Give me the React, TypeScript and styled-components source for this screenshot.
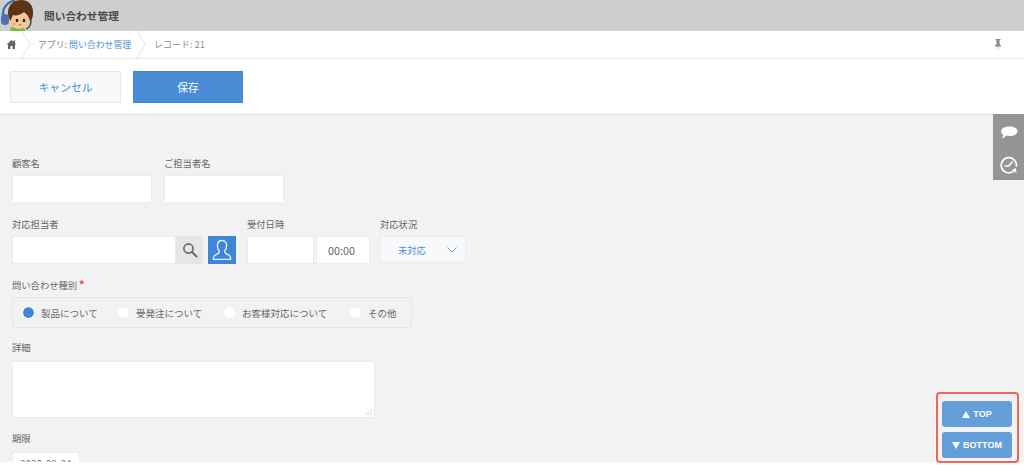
import React from "react";
import styled, { createGlobalStyle } from "styled-components";

const Global = createGlobalStyle`
  html, body { margin: 0; padding: 0; background: #fff; }
  body { font-family: "Noto Sans CJK JP", "Noto Sans", sans-serif; color: #666; }
`;

const Page = styled.div`
  position: relative;
  width: 1024px;
  height: 465px;
  overflow: hidden;
  display: flex;
  flex-direction: column;
`;

const GlobalBar = styled.header`
  height: 31px;
  flex: none;
  background: #cdcfce;
  display: flex;
  align-items: center;
  box-sizing: border-box;
  padding-left: 44px;
  position: relative;
`;

const AvatarSlot = styled.svg`
  position: absolute;
  left: 0;
  top: 0;
  z-index: 2;
`;

const AppTitle = styled.h1`
  margin: 0;
  font-size: 10.7px;
  font-weight: 700;
  color: #4a4a4a;
  line-height: 31px;
`;

const Breadcrumb = styled.nav`
  height: 28px;
  flex: none;
  box-sizing: border-box;
  background: #fff;
  border-bottom: 1px solid #e8e8e8;
  display: flex;
  align-items: center;
  font-size: 8.9px;
  color: #888;
`;

const Crumb = styled.div<{ $w: number; $pl: number }>`
  width: ${(p) => p.$w}px;
  padding-left: ${(p) => p.$pl}px;
  box-sizing: border-box;
  height: 27px;
  display: flex;
  align-items: center;
  position: relative;
  flex: none;
  white-space: nowrap;
`;

const Chevron = styled.svg`
  position: absolute;
  right: 0;
  top: 0;
`;

const CrumbLink = styled.span`
  color: #4a90d9;
`;

const RecordText = styled.span`
  letter-spacing: 0.15px;
`;

const PinSlot = styled.div`
  margin-left: auto;
  margin-right: 22px;
  display: flex;
  align-items: center;
`;

const Toolbar = styled.div`
  height: 56px;
  flex: none;
  box-sizing: border-box;
  background: #fff;
  border-bottom: 1px solid #e3e3e3;
  padding: 12px 0 0 10px;
  display: flex;
  align-items: flex-start;
  gap: 12px;
`;

const ActionButton = styled.button<{ $primary?: boolean }>`
  width: ${(p) => (p.$primary ? 110 : 111)}px;
  height: 32px;
  box-sizing: border-box;
  border: 1px solid ${(p) => (p.$primary ? "#3f86d0" : "#e3e7e8")};
  background: ${(p) => (p.$primary ? "#4a8cd6" : "#f7f9fa")};
  color: ${(p) => (p.$primary ? "#ffffff" : "#4a90d9")};
  font-family: inherit;
  font-size: 10.8px;
  padding: 0;
`;

const Form = styled.main`
  flex: none;
  height: 347px;
  overflow: hidden;
  background: #f2f2f2;
  padding: 42px 0 0 12px;
  box-sizing: border-box;
  display: flex;
  flex-direction: column;
`;

const Row = styled.div<{ $mb: number }>`
  display: flex;
  align-items: flex-start;
  margin-bottom: ${(p) => p.$mb}px;
`;

const Field = styled.div<{ $w: number }>`
  width: ${(p) => p.$w}px;
  flex: none;
`;

const Label = styled.div<{ $gap?: number }>`
  font-size: 9.3px;
  line-height: 13px;
  height: 13px;
  margin-bottom: ${(p) => p.$gap ?? 5}px;
  color: #666;
  white-space: nowrap;
`;

const Required = styled.span`
  color: #e74c3c;
  margin-left: 2px;
  font-size: 11px;
  font-weight: 700;
`;

const Input = styled.div<{ $w: number; $h?: number }>`
  width: ${(p) => p.$w}px;
  height: ${(p) => p.$h ?? 28}px;
  box-sizing: border-box;
  background: #fff;
  border: 1px solid #ececec;
  flex: none;
  font-size: 10.8px;
  color: #666;
  display: flex;
  align-items: center;
  justify-content: center;
  position: relative;
`;

const TimeInput = styled(Input)`
  padding-right: 3px;
`;

const DateInput = styled(Input)`
  padding-bottom: 6px;
`;

const Controls = styled.div<{ $gap?: number }>`
  display: flex;
  align-items: stretch;
  gap: ${(p) => p.$gap ?? 0}px;
`;

const SearchButton = styled.div`
  width: 27px;
  height: 28px;
  background: #e6e6e6;
  display: flex;
  align-items: center;
  justify-content: center;
`;

const UserButton = styled.div`
  width: 28px;
  height: 28px;
  margin-left: 5px;
  background: #3f87d6;
  display: flex;
  align-items: center;
  justify-content: center;
`;

const Select = styled.div`
  width: 86px;
  height: 27px;
  box-sizing: border-box;
  background: #f7f9fa;
  border: 1px solid #e9ecee;
  color: #4a90d9;
  font-size: 9.3px;
  display: flex;
  align-items: center;
  justify-content: space-between;
  padding: 0 8px 0 17px;
`;

const RadioBox = styled.div`
  width: 400px;
  height: 31px;
  box-sizing: border-box;
  border: 1px solid #e6e6e6;
  display: flex;
  align-items: center;
  padding-left: 9px;
  font-size: 9.5px;
  color: #666;
`;

const RadioItem = styled.label<{ $w: number }>`
  width: ${(p) => p.$w}px;
  flex: none;
  display: flex;
  align-items: center;
  gap: 6px;
  white-space: nowrap;
`;

const RadioDot = styled.span<{ $checked?: boolean }>`
  width: 13px;
  height: 13px;
  flex: none;
  box-sizing: border-box;
  border-radius: 50%;
  background: ${(p) => (p.$checked ? "#3f87d6" : "#fff")};
  background-clip: padding-box;
  border: 1.5px solid ${(p) => (p.$checked ? "#fff" : "#f4f4f4")};
`;

const Grip = styled.svg`
  position: absolute;
  right: 1px;
  bottom: 1px;
`;

const DateText = styled.span`
  font-size: 9.3px;
  color: #777;
  white-space: nowrap;
  letter-spacing: 0.4px;
`;

const SideTools = styled.aside`
  position: absolute;
  right: 0;
  top: 114px;
  width: 31px;
  height: 66px;
  background: #959595;
  display: flex;
  flex-direction: column;
  align-items: center;
  gap: 17px;
  padding: 12px 0 0 1px;
  box-sizing: border-box;
`;

const ScrollFrame = styled.div`
  position: absolute;
  left: 936px;
  top: 392px;
  width: 83px;
  height: 71px;
  box-sizing: border-box;
  border: 2px solid #e8695a;
  border-radius: 4px;
  padding: 7px 5px 0 4px;
  display: flex;
  flex-direction: column;
  gap: 5px;
`;

const ScrollButton = styled.button`
  height: 26px;
  border: none;
  border-radius: 3px;
  background: #649fdc;
  color: #fff;
  font-family: "Liberation Sans", Arial, sans-serif;
  font-weight: 700;
  font-size: 9px;
  padding: 0;
  display: flex;
  align-items: center;
  justify-content: center;
  gap: 3px;
`;

const ScrollArrow = styled.span<{ $down?: boolean }>`
  width: 0;
  height: 0;
  border-left: 4.5px solid transparent;
  border-right: 4.5px solid transparent;
  border-${(p) => (p.$down ? "top" : "bottom")}: 7px solid #fff;
`;

const Avatar = () => (
  <AvatarSlot width="36" height="31" viewBox="0 0 36 31">
    <path d="M10 31 L11 27 H24 L25 31 Z" fill="#6cc04a" />
    <path d="M3 16 C2 8 7 2 15 0.5" fill="none" stroke="#3f66a8" strokeWidth="2.2" />
    <ellipse cx="19" cy="20" rx="10" ry="9" fill="#f9c796" />
    <path d="M8 13 C8 4 14 0 21 0 C29 0 34 6 33 14 C33 17 32 20 30 21 C29 17 27 14 24 12 C21 15 16 16 13 15 C12 17 11 19 11 21 C9 19 8 16 8 13 Z" fill="#5a3413" />
    <rect x="1" y="14" width="8" height="11" rx="4" fill="#4a72b5" />
    <path d="M31 20 C31 25 29 28 26 29" fill="none" stroke="#3a3a3a" strokeWidth="1.3" />
    <ellipse cx="17" cy="20.5" rx="1.3" ry="1.8" fill="#2d1a0c" />
    <ellipse cx="24" cy="20.5" rx="1.3" ry="1.8" fill="#2d1a0c" />
    <ellipse cx="14" cy="24" rx="2" ry="1.2" fill="#f4a27a" />
    <path d="M18 24.5 Q20 26.5 22 24.5 Z" fill="#c8502d" />
  </AvatarSlot>
);

const Home = () => (
  <svg width="11" height="11" viewBox="0 0 11 11">
    <path d="M5.5 1 L7.5 2.8 V1.4 H9 V4.2 L10.5 5.6 H9 V10 H6.6 V7 H4.4 V10 H2 V5.6 H.5 Z" fill="#666" />
  </svg>
);

const CrumbChevron = () => (
  <Chevron width="9" height="27" viewBox="0 0 9 27">
    <path d="M0 0 L8 13.5 L0 27" fill="none" stroke="#e3e3e3" strokeWidth="1" />
  </Chevron>
);

const Pin = () => (
  <svg width="8" height="13" viewBox="0 0 8 13">
    <path d="M1.5 1 H6.5 V2 H5.6 V6 L7 7.6 V8.4 H4.4 L4 12.5 L3.6 8.4 H1 V7.6 L2.4 6 V2 H1.5 Z" fill="#8c8c8c" />
  </svg>
);

const SearchIcon = () => (
  <svg width="16" height="16" viewBox="0 0 16 16">
    <circle cx="6.5" cy="6.5" r="4.6" fill="none" stroke="#666" strokeWidth="1.6" />
    <path d="M10 10 L14.5 14.5" stroke="#666" strokeWidth="2" strokeLinecap="round" />
  </svg>
);

const UserIcon = () => (
  <svg width="20" height="22" viewBox="0 0 20 22">
    <path d="M10 1.5 C6.8 1.5 5.4 4 5.4 6.8 C5.4 9.4 6.4 11 7.2 12 C7.6 13.6 6.6 14.6 4.6 15.4 C2.6 16.2 1.4 17 1.4 19 V20.4 H18.6 V19 C18.6 17 17.4 16.2 15.4 15.4 C13.4 14.6 12.4 13.6 12.8 12 C13.6 11 14.6 9.4 14.6 6.8 C14.6 4 13.2 1.5 10 1.5 Z" fill="none" stroke="#e8f1fb" strokeWidth="1.3" />
  </svg>
);

const Caret = () => (
  <svg width="10" height="6" viewBox="0 0 10 6">
    <path d="M.5 .5 L5 5 L9.5 .5" fill="none" stroke="#6ea6e0" strokeWidth="1" />
  </svg>
);

const ChatIcon = () => (
  <svg width="18" height="13" viewBox="0 0 18 13">
    <path d="M9.5 0.5 C14 0.5 17.5 2.4 17.5 5.2 C17.5 8 14 10 9.5 10 C8.4 10 7.4 9.9 6.4 9.6 C5 11 3.4 12.4 1.6 12.4 C2.6 11.4 3.2 10 3.1 8.8 C1.8 7.8 1 6.6 1 5.2 C1 2.4 5 0.5 9.5 0.5 Z" fill="#fff" />
  </svg>
);

const SpeedIcon = () => (
  <svg width="18" height="18" viewBox="0 0 18 18">
    <path d="M13 15.6 A7.6 7.6 0 1 1 16.4 10" fill="none" stroke="#fff" strokeWidth="1.7" strokeLinecap="round" />
    <path d="M4.6 10 H8.8 L12.6 5.6" fill="none" stroke="#fff" strokeWidth="1.6" />
    <path d="M11.6 14 L16 12 L16.4 17 Z" fill="#fff" />
  </svg>
);

const GripIcon = () => (
  <Grip width="8" height="8" viewBox="0 0 8 8">
    <path d="M7 1 L1 7 M7 3.5 L3.5 7 M7 6 L6 7" stroke="#bbb" strokeWidth="1" strokeDasharray="1 1" />
  </Grip>
);

export default function App() {
  return (
    <Page>
      <Global />
      <GlobalBar>
        <Avatar />
        <AppTitle>問い合わせ管理</AppTitle>
      </GlobalBar>
      <Breadcrumb>
        <Crumb $w={31} $pl={6}>
          <Home />
          <CrumbChevron />
        </Crumb>
        <Crumb $w={115} $pl={7}>
          アプリ:&nbsp;<CrumbLink>問い合わせ管理</CrumbLink>
          <CrumbChevron />
        </Crumb>
        <Crumb $w={80} $pl={8}>
          <RecordText>レコード: 21</RecordText>
        </Crumb>
        <PinSlot>
          <Pin />
        </PinSlot>
      </Breadcrumb>
      <Toolbar>
        <ActionButton>キャンセル</ActionButton>
        <ActionButton $primary>保存</ActionButton>
      </Toolbar>
      <Form>
        <Row $mb={15}>
          <Field $w={152}>
            <Label>顧客名</Label>
            <Input $w={140} />
          </Field>
          <Field $w={120}>
            <Label>ご担当者名</Label>
            <Input $w={120} />
          </Field>
        </Row>
        <Row $mb={14}>
          <Field $w={235}>
            <Label>対応担当者</Label>
            <Controls>
              <Input $w={164} />
              <SearchButton>
                <SearchIcon />
              </SearchButton>
              <UserButton>
                <UserIcon />
              </UserButton>
            </Controls>
          </Field>
          <Field $w={133}>
            <Label>受付日時</Label>
            <Controls $gap={2}>
              <Input $w={67} />
              <TimeInput $w={54}>00:00</TimeInput>
            </Controls>
          </Field>
          <Field $w={86}>
            <Label>対応状況</Label>
            <Select>
              未対応
              <Caret />
            </Select>
          </Field>
        </Row>
        <Row $mb={13}>
          <Field $w={400}>
            <Label $gap={6}>
              問い合わせ種別<Required>*</Required>
            </Label>
            <RadioBox>
              <RadioItem $w={95}>
                <RadioDot $checked />
                製品について
              </RadioItem>
              <RadioItem $w={106}>
                <RadioDot />
                受発注について
              </RadioItem>
              <RadioItem $w={126}>
                <RadioDot />
                お客様対応について
              </RadioItem>
              <RadioItem $w={50}>
                <RadioDot />
                その他
              </RadioItem>
            </RadioBox>
          </Field>
        </Row>
        <Row $mb={14}>
          <Field $w={363}>
            <Label $gap={7}>詳細</Label>
            <Input $w={363} $h={57}>
              <GripIcon />
            </Input>
          </Field>
        </Row>
        <Row $mb={0}>
          <Field $w={68}>
            <Label $gap={7}>期限</Label>
            <DateInput $w={68}>
              <DateText>2020-09-24</DateText>
            </DateInput>
          </Field>
        </Row>
      </Form>
      <SideTools>
        <ChatIcon />
        <SpeedIcon />
      </SideTools>
      <ScrollFrame>
        <ScrollButton>
          <ScrollArrow />
          TOP
        </ScrollButton>
        <ScrollButton>
          <ScrollArrow $down />
          BOTTOM
        </ScrollButton>
      </ScrollFrame>
    </Page>
  );
}
